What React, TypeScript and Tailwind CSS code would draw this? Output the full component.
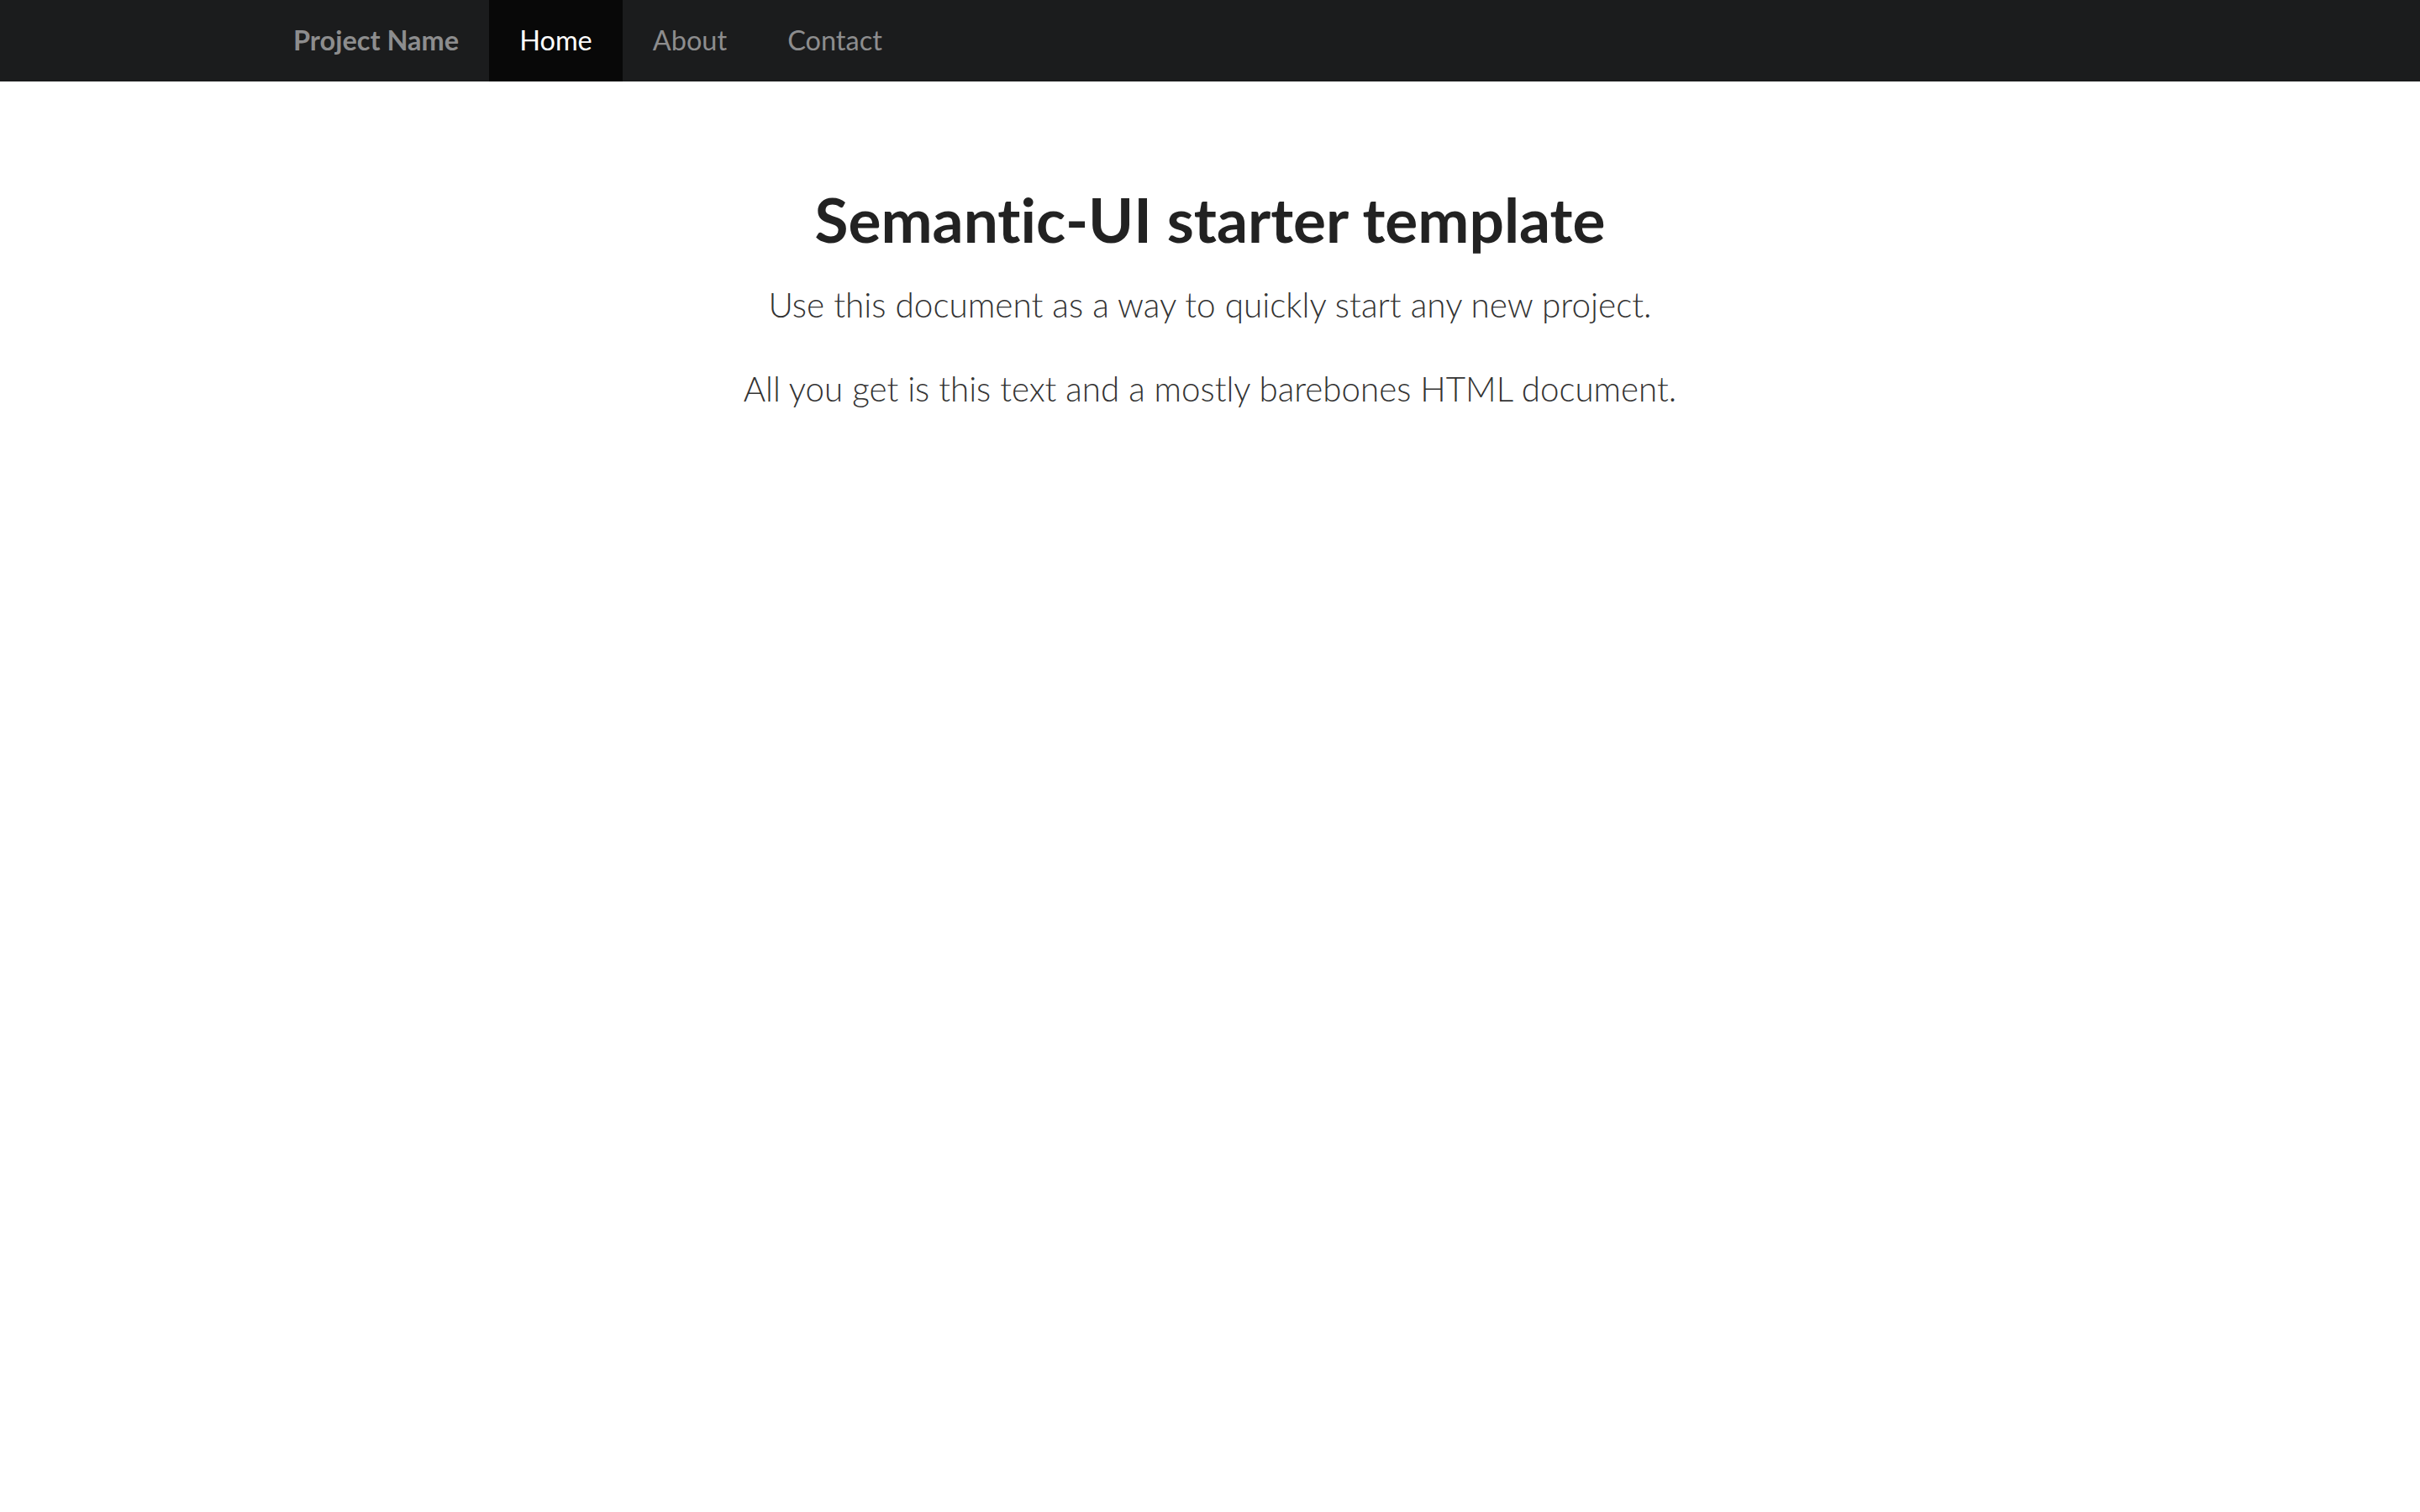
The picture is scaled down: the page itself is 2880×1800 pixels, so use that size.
const navItems = [
  { label: "Home", active: true },
  { label: "About", active: false },
  { label: "Contact", active: false },
]

export default function App() {
  return (
    <div className="min-h-screen bg-white font-['Lato',sans-serif] [font-variant-ligatures:none]">
      <nav className="h-[97px] bg-[#1b1c1d]">
        <div className="mx-auto flex h-full w-[2254px]">
          <a className="flex items-center px-[36px] text-[32.5px] font-bold leading-none text-[#8d8d8e]" href="#">
            Project Name
          </a>
          {navItems.map((item) => (
            <a
              key={item.label}
              href="#"
              className={
                item.active
                  ? "flex items-center bg-[#080808] px-[36px] text-[32.5px] leading-none text-white"
                  : "flex items-center px-[36px] text-[32.5px] leading-none text-[#8d8d8e]"
              }
            >
              {item.label}
            </a>
          ))}
        </div>
      </nav>

      <main className="flex flex-col items-center pt-[121px] text-center">
        <h1 className="text-[73px] font-bold leading-[1.2] text-[#222222]">Semantic-UI starter template</h1>
        <p className="mt-[27px] text-[40.5px] font-light leading-[60px] text-[#333333]">
          Use this document as a way to quickly start any new project.
        </p>
        <p className="mt-[40px] text-[40.3px] font-light leading-[60px] text-[#333333]">
          All you get is this text and a mostly barebones HTML document.
        </p>
      </main>
    </div>
  )
}
